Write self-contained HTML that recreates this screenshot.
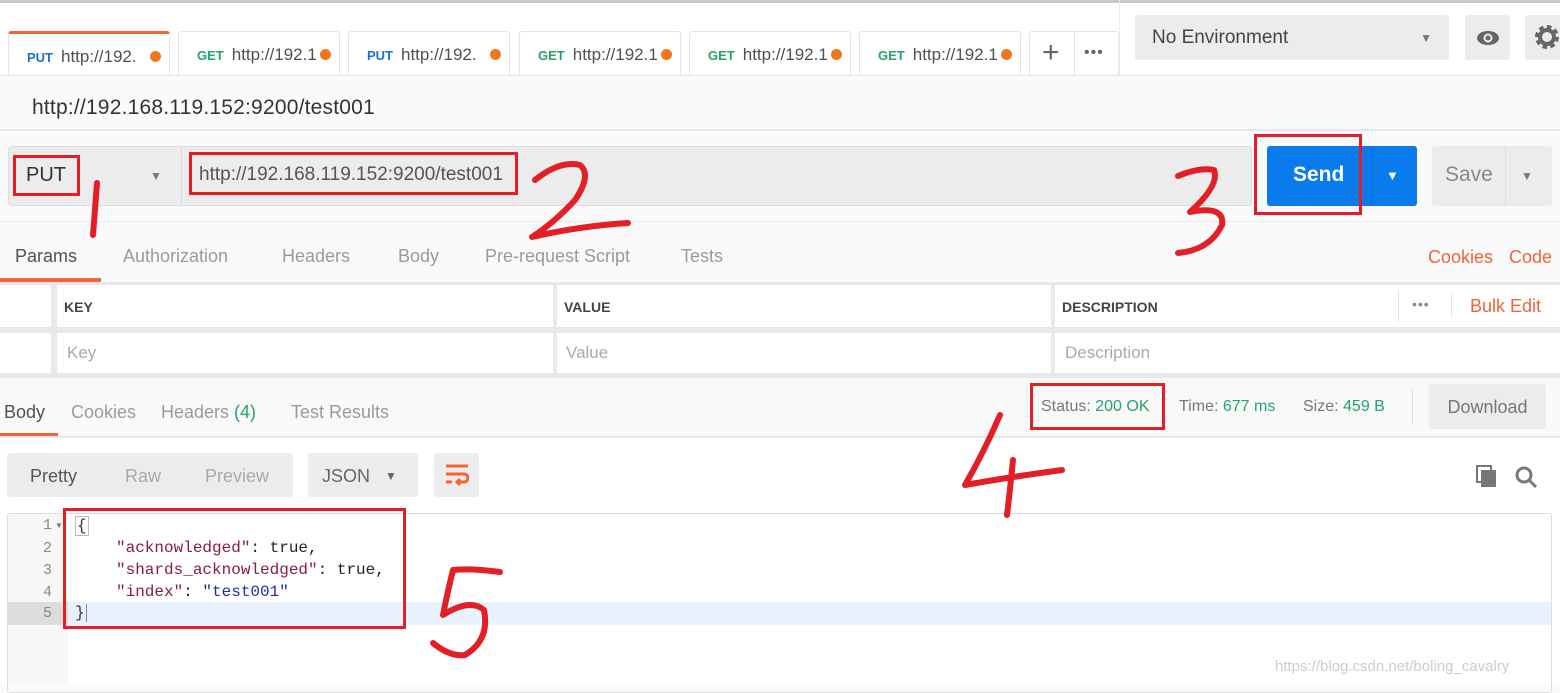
<!DOCTYPE html>
<html><head><meta charset="utf-8"><style>
*{box-sizing:border-box;margin:0;padding:0}
body{width:1560px;height:685px;overflow:hidden;position:relative;background:#fafafa;font-family:"Liberation Sans",sans-serif;color:#505050}
.a{position:absolute}
.tab{position:absolute;top:31px;height:45px;background:#fff;border:1px solid #e4e4e4;border-bottom:none;border-radius:3px 3px 0 0;font-size:17px;line-height:46px;padding-left:18px;white-space:nowrap;overflow:hidden}
.tab b{font-size:13px;margin-right:8px}
.put{color:#1b6ed7}.get{color:#26a369}
.dot{position:absolute;right:8px;top:17px;width:11px;height:11px;border-radius:50%;background:#f0771f}
.g{background:#ececec}
.cell{position:absolute;background:#fff}
.lbl{font-size:14px;font-weight:bold;color:#444}
.ph{font-size:17px;color:#aaa}
.t{font-size:18px;color:#9a9a9a;position:absolute}
.mono{font-family:"Liberation Mono",monospace;font-size:16px;position:absolute;left:75px}
.ln{position:absolute;left:8px;width:44px;text-align:right;font-family:"Liberation Mono",monospace;font-size:15px;color:#888}
.red{position:absolute;border:3px solid #e31e25}
</style></head><body>
<div class="a" style="left:0;top:0;width:1560px;height:76px;background:#fff"></div>
<div class="a" style="left:0;top:0;width:1560px;height:3px;background:#c8c8c8"></div>
<div class="tab" style="left:8px;width:162px;border-top:3px solid #f0643a;padding-left:18px"><b class="put">PUT</b>http://192.<span class="dot"></span></div>
<div class="tab" style="left:178px;width:162px"><b class="get">GET</b>http://192.1<span class="dot"></span></div>
<div class="tab" style="left:348px;width:162px"><b class="put">PUT</b>http://192.<span class="dot"></span></div>
<div class="tab" style="left:519px;width:162px"><b class="get">GET</b>http://192.1<span class="dot"></span></div>
<div class="tab" style="left:689px;width:162px"><b class="get">GET</b>http://192.1<span class="dot"></span></div>
<div class="tab" style="left:859px;width:162px"><b class="get">GET</b>http://192.1<span class="dot"></span></div>
<div class="tab" style="left:1029px;width:90px;padding:0"><span class="a" style="left:12px;top:-2px;font-size:30px;color:#666">+</span><span class="a" style="left:44px;top:0;width:1px;height:45px;background:#e4e4e4"></span><span class="a" style="left:54px;top:-2px;font-size:16px;color:#666;letter-spacing:1px">•••</span></div>
<div class="a" style="left:1119px;top:0;width:1px;height:76px;background:#eee"></div>
<div class="a g" style="left:1135px;top:15px;width:314px;height:45px;border-radius:3px;font-size:19px;color:#444;line-height:46px;padding-left:17px">No Environment<span class="a" style="right:17px;top:0;font-size:12px;color:#777">▼</span></div>
<div class="a g" style="left:1465px;top:15px;width:45px;height:45px;border-radius:3px"><svg class="a" style="left:11px;top:12px" width="24" height="22" viewBox="0 0 24 22"><ellipse cx="12" cy="11" rx="11" ry="7" fill="#666"/><circle cx="12" cy="11" r="4.5" fill="#ececec"/><circle cx="12" cy="11" r="2.5" fill="#666"/></svg></div>
<div class="a g" style="left:1525px;top:15px;width:40px;height:45px;border-radius:3px"><svg class="a" style="left:9px;top:9px" width="26" height="26" viewBox="0 0 26 26"><circle cx="13" cy="13" r="9" fill="none" stroke="#666" stroke-width="6" stroke-dasharray="4 3"/><circle cx="13" cy="13" r="7" fill="none" stroke="#666" stroke-width="4"/></svg></div>
<div class="a" style="left:0;top:75px;width:1560px;height:1px;background:#e4e4e4"></div>
<div class="a" style="left:32px;top:96px;font-size:21px;color:#333;letter-spacing:0.2px">http://192.168.119.152:9200/test001</div>
<div class="a" style="left:0;top:129px;width:1560px;height:2px;background:#e8e8e8"></div>
<div class="a g" style="left:8px;top:146px;width:1244px;height:60px;border:1px solid #ddd;border-radius:3px"></div>
<div class="a" style="left:181px;top:147px;width:1px;height:58px;background:#d8d8d8"></div>
<div class="a" style="left:26px;top:164px;font-size:20px;color:#333">PUT</div>
<div class="a" style="left:150px;top:169px;font-size:12px;color:#777">▼</div>
<div class="a" style="left:199px;top:164px;font-size:19px;color:#555">http://192.168.119.152:9200/test001</div>
<div class="a" style="left:1267px;top:146px;width:150px;height:60px;background:#097bed;border-radius:3px"></div>
<div class="a" style="left:1293px;top:163px;font-size:21px;color:#fff;font-weight:bold">Send</div>
<div class="a" style="left:1372px;top:146px;width:1px;height:60px;background:#0a6fd4"></div>
<div class="a" style="left:1386px;top:168px;font-size:13px;color:#fff">▼</div>
<div class="a g" style="left:1432px;top:146px;width:120px;height:60px;border-radius:3px"></div>
<div class="a" style="left:1445px;top:163px;font-size:21px;color:#888">Save</div>
<div class="a" style="left:1505px;top:146px;width:1px;height:60px;background:#ddd"></div>
<div class="a" style="left:1521px;top:169px;font-size:12px;color:#777">▼</div>
<div class="a" style="left:0;top:221px;width:1560px;height:1px;background:#e8e8e8"></div>
<div class="t" style="left:15px;top:246px;color:#505050">Params</div>
<div class="t" style="left:123px;top:246px">Authorization</div>
<div class="t" style="left:282px;top:246px">Headers</div>
<div class="t" style="left:398px;top:246px">Body</div>
<div class="t" style="left:485px;top:246px">Pre-request Script</div>
<div class="t" style="left:681px;top:246px">Tests</div>
<div class="t" style="left:1428px;top:247px;color:#f0643a">Cookies</div>
<div class="t" style="left:1509px;top:247px;color:#f0643a">Code</div>
<div class="a" style="left:0;top:278px;width:101px;height:4px;background:#f0643a"></div>
<div class="a" style="left:0;top:282px;width:1560px;height:96px;background:#e8e8e8"></div>
<div class="cell" style="left:0;top:285px;width:51px;height:42px"></div>
<div class="cell" style="left:57px;top:285px;width:496px;height:42px"></div>
<div class="cell" style="left:557px;top:285px;width:494px;height:42px"></div>
<div class="cell" style="left:1055px;top:285px;width:505px;height:42px"></div>
<div class="cell" style="left:0;top:333px;width:51px;height:40px"></div>
<div class="cell" style="left:57px;top:333px;width:496px;height:40px"></div>
<div class="cell" style="left:557px;top:333px;width:494px;height:40px"></div>
<div class="cell" style="left:1055px;top:333px;width:505px;height:40px"></div>
<div class="a lbl" style="left:64px;top:299px">KEY</div>
<div class="a lbl" style="left:564px;top:299px">VALUE</div>
<div class="a lbl" style="left:1062px;top:299px">DESCRIPTION</div>
<div class="a" style="left:1398px;top:290px;width:1px;height:32px;background:#e4e4e4"></div>
<div class="a" style="left:1412px;top:296px;font-size:14px;color:#888;letter-spacing:1px">•••</div>
<div class="a" style="left:1451px;top:294px;width:1px;height:24px;background:#e4e4e4"></div>
<div class="a" style="left:1470px;top:296px;font-size:18px;color:#f0643a">Bulk Edit</div>
<div class="a ph" style="left:67px;top:343px">Key</div>
<div class="a ph" style="left:566px;top:343px">Value</div>
<div class="a ph" style="left:1065px;top:343px">Description</div>
<div class="a" style="left:0;top:378px;width:1560px;height:59px;background:#f9f9f9"></div>
<div class="t" style="left:4px;top:402px;color:#505050">Body</div>
<div class="t" style="left:71px;top:402px">Cookies</div>
<div class="t" style="left:161px;top:402px">Headers <span style="color:#26a369">(4)</span></div>
<div class="t" style="left:291px;top:402px">Test Results</div>
<div class="a" style="left:0;top:433px;width:58px;height:4px;background:#f0643a"></div>
<div class="a" style="left:0;top:436px;width:1560px;height:2px;background:#e8e8e8"></div>
<div class="a" style="left:1041px;top:398px;font-size:16px;color:#777">Status: <span style="color:#26a369">200 OK</span></div>
<div class="a" style="left:1179px;top:398px;font-size:16px;color:#777">Time: <span style="color:#26a369">677 ms</span></div>
<div class="a" style="left:1303px;top:398px;font-size:16px;color:#777">Size: <span style="color:#26a369">459 B</span></div>
<div class="a" style="left:1412px;top:389px;width:1px;height:36px;background:#ddd"></div>
<div class="a g" style="left:1429px;top:384px;width:117px;height:45px;border-radius:3px;font-size:18px;color:#777;line-height:46px;text-align:center">Download</div>
<div class="a" style="left:0;top:438px;width:1560px;height:247px;background:#fff"></div>
<div class="a g" style="left:7px;top:453px;width:286px;height:44px;border-radius:3px"></div>
<div class="a" style="left:30px;top:466px;font-size:18px;color:#555">Pretty</div>
<div class="a" style="left:125px;top:466px;font-size:18px;color:#aaa">Raw</div>
<div class="a" style="left:205px;top:466px;font-size:18px;color:#aaa">Preview</div>
<div class="a g" style="left:308px;top:453px;width:110px;height:44px;border-radius:3px"></div>
<div class="a" style="left:322px;top:466px;font-size:18px;color:#666">JSON</div>
<div class="a" style="left:385px;top:469px;font-size:12px;color:#666">▼</div>
<div class="a g" style="left:434px;top:453px;width:45px;height:44px;border-radius:3px"><svg class="a" style="left:11px;top:10px" width="24" height="24" viewBox="0 0 24 24" fill="none" stroke="#f0643a" stroke-width="3"><path d="M1 3h22M1 11h18a4 4 0 0 1 0 8h-7M15 16l-3 3 3 3M1 19h6"/></svg></div>
<svg class="a" style="left:1476px;top:465px" width="22" height="24" viewBox="0 0 22 24"><rect x="1" y="1" width="14" height="16" fill="none" stroke="#777" stroke-width="2"/><rect x="5" y="5" width="15" height="17" fill="#777"/></svg>
<svg class="a" style="left:1514px;top:465px" width="24" height="24" viewBox="0 0 24 24" fill="none" stroke="#777" stroke-width="3"><circle cx="10" cy="10" r="7"/><path d="M15 15l7 7"/></svg>
<div class="a" style="left:7px;top:513px;width:1545px;height:180px;border:1px solid #ddd;border-radius:3px"></div>
<div class="a" style="left:8px;top:514px;width:60px;height:171px;background:#f7f7f7"></div>
<div class="a" style="left:68px;top:602px;width:1483px;height:23px;background:#e8f2ff"></div>
<div class="a" style="left:8px;top:602px;width:60px;height:23px;background:#ddd"></div>
<div class="ln" style="top:517px">1</div><div class="a" style="left:55px;top:521px;font-size:8px;color:#777">▼</div>
<div class="ln" style="top:540px">2</div><div class="ln" style="top:562px">3</div><div class="ln" style="top:584px">4</div><div class="ln" style="top:605px">5</div>
<div class="mono" style="top:516px;color:#333;border:1px solid #bbb;padding:0 1px">{</div>
<div class="mono" style="top:539px;left:116px"><span style="color:#8b1a4a">"acknowledged"</span><span style="color:#222">: true,</span></div>
<div class="mono" style="top:561px;left:116px"><span style="color:#8b1a4a">"shards_acknowledged"</span><span style="color:#222">: true,</span></div>
<div class="mono" style="top:583px;left:116px"><span style="color:#8b1a4a">"index"</span><span style="color:#222">: </span><span style="color:#1f2aa8">"test001"</span></div>
<div class="mono" style="top:604px;color:#333;border-right:1px solid #888;padding-right:1px">}</div>
<div class="a" style="left:1275px;top:658px;font-size:15px;color:#ccc">https://blog.csdn.net/boling_cavalry</div>
<div class="red" style="left:13px;top:155px;width:67px;height:41px"></div>
<div class="red" style="left:189px;top:152px;width:329px;height:43px"></div>
<div class="red" style="left:1254px;top:134px;width:108px;height:81px"></div>
<div class="red" style="left:1030px;top:383px;width:135px;height:47px"></div>
<div class="red" style="left:63px;top:508px;width:343px;height:121px"></div>
<svg class="a" style="left:0;top:0" width="1560" height="685" fill="none" stroke="#e31e25" stroke-width="6" stroke-linecap="round" stroke-linejoin="round">
<path d="M97 183 Q95 210 93 235"/>
<path d="M535 180 Q560 160 580 165 Q592 175 575 200 Q555 222 532 237 Q580 226 628 223"/>
<path d="M1178 176 Q1200 167 1214 170 Q1220 185 1190 212 Q1225 205 1222 225 Q1210 250 1178 253"/>
<path d="M1000 415 Q985 450 965 485 Q1010 477 1062 470 M1013 460 Q1010 490 1007 515"/>
<path d="M500 572 Q470 568 453 570 Q448 590 443 615 Q470 598 484 610 Q490 640 465 655 Q450 657 433 643"/>
</svg>
</body></html>
